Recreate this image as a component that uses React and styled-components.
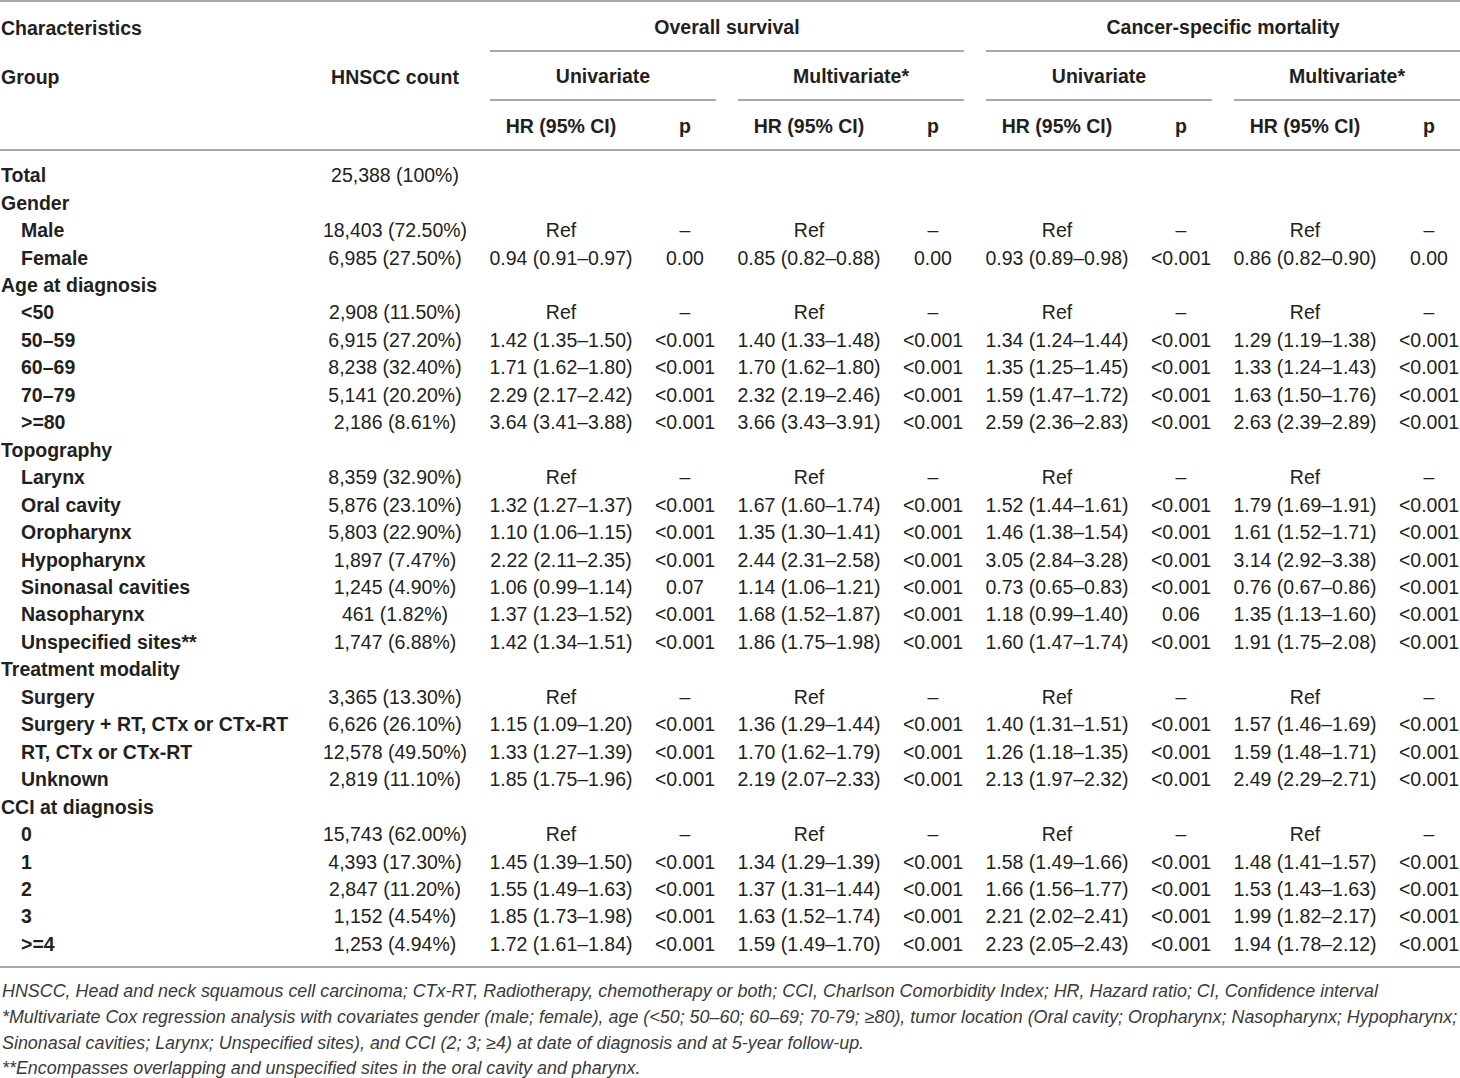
import React from "react";
import styled, { createGlobalStyle } from "styled-components";

const Global = createGlobalStyle`
  html, body { margin: 0; padding: 0; background: #fff; }
  body { font-family: "Liberation Sans", Arial, Helvetica, sans-serif; color: #231f20; }
`;

const COLS = "322px 146px 186px 62px 186px 62px 186px 62px 186px 62px";
const LINE = "2px solid #a9a9a9";

const Page = styled.div`
  width: 1460px;
`;

const Table = styled.div`
  border-top: ${LINE};
  border-bottom: ${LINE};
`;

const Head = styled.div`
  display: grid;
  grid-template-columns: ${COLS};
  grid-template-rows: 50px 49px 48px;
  border-bottom: ${LINE};
  font-size: 19.5px;
  font-weight: 700;
`;

const HeadCell = styled.div`
  grid-column: ${(p) => p.$col};
  grid-row: ${(p) => p.$row};
  display: flex;
  align-items: center;
  justify-content: ${(p) => (p.$left ? "flex-start" : "center")};
  padding-left: ${(p) => (p.$left ? "1px" : "0")};
  padding-top: 2px;
  white-space: nowrap;
`;

const SpanHead = styled(HeadCell)`
  margin-left: 22px;
  border-bottom: ${LINE};
`;

const Body = styled.div`
  padding: 11px 0 8px;
`;

const Row = styled.div`
  display: grid;
  grid-template-columns: ${COLS};
  height: 27.46px;
  align-items: center;
  font-size: 19.5px;
  white-space: nowrap;
`;

const Label = styled.div`
  font-weight: 700;
  padding-left: ${(p) => (p.$indent ? "21px" : "1px")};
`;

const Value = styled.div`
  text-align: center;
`;

const Notes = styled.div`
  padding-top: 11px;
  font-size: 17.9px;
  font-style: italic;
  line-height: 25.7px;
  color: #3a3a3a;
  white-space: nowrap;
`;

const Note = styled.div`
  padding-left: 2px;
`;

const sections = [
  { label: "Total", count: "25,388 (100%)", top: true },
  { label: "Gender", top: true },
  { label: "Male", count: "18,403 (72.50%)", ref: true },
  { label: "Female", count: "6,985 (27.50%)", v: ["0.94 (0.91–0.97)", "0.00", "0.85 (0.82–0.88)", "0.00", "0.93 (0.89–0.98)", "<0.001", "0.86 (0.82–0.90)", "0.00"] },
  { label: "Age at diagnosis", top: true },
  { label: "<50", count: "2,908 (11.50%)", ref: true },
  { label: "50–59", count: "6,915 (27.20%)", v: ["1.42 (1.35–1.50)", "<0.001", "1.40 (1.33–1.48)", "<0.001", "1.34 (1.24–1.44)", "<0.001", "1.29 (1.19–1.38)", "<0.001"] },
  { label: "60–69", count: "8,238 (32.40%)", v: ["1.71 (1.62–1.80)", "<0.001", "1.70 (1.62–1.80)", "<0.001", "1.35 (1.25–1.45)", "<0.001", "1.33 (1.24–1.43)", "<0.001"] },
  { label: "70–79", count: "5,141 (20.20%)", v: ["2.29 (2.17–2.42)", "<0.001", "2.32 (2.19–2.46)", "<0.001", "1.59 (1.47–1.72)", "<0.001", "1.63 (1.50–1.76)", "<0.001"] },
  { label: ">=80", count: "2,186 (8.61%)", v: ["3.64 (3.41–3.88)", "<0.001", "3.66 (3.43–3.91)", "<0.001", "2.59 (2.36–2.83)", "<0.001", "2.63 (2.39–2.89)", "<0.001"] },
  { label: "Topography", top: true },
  { label: "Larynx", count: "8,359 (32.90%)", ref: true },
  { label: "Oral cavity", count: "5,876 (23.10%)", v: ["1.32 (1.27–1.37)", "<0.001", "1.67 (1.60–1.74)", "<0.001", "1.52 (1.44–1.61)", "<0.001", "1.79 (1.69–1.91)", "<0.001"] },
  { label: "Oropharynx", count: "5,803 (22.90%)", v: ["1.10 (1.06–1.15)", "<0.001", "1.35 (1.30–1.41)", "<0.001", "1.46 (1.38–1.54)", "<0.001", "1.61 (1.52–1.71)", "<0.001"] },
  { label: "Hypopharynx", count: "1,897 (7.47%)", v: ["2.22 (2.11–2.35)", "<0.001", "2.44 (2.31–2.58)", "<0.001", "3.05 (2.84–3.28)", "<0.001", "3.14 (2.92–3.38)", "<0.001"] },
  { label: "Sinonasal cavities", count: "1,245 (4.90%)", v: ["1.06 (0.99–1.14)", "0.07", "1.14 (1.06–1.21)", "<0.001", "0.73 (0.65–0.83)", "<0.001", "0.76 (0.67–0.86)", "<0.001"] },
  { label: "Nasopharynx", count: "461 (1.82%)", v: ["1.37 (1.23–1.52)", "<0.001", "1.68 (1.52–1.87)", "<0.001", "1.18 (0.99–1.40)", "0.06", "1.35 (1.13–1.60)", "<0.001"] },
  { label: "Unspecified sites**", count: "1,747 (6.88%)", v: ["1.42 (1.34–1.51)", "<0.001", "1.86 (1.75–1.98)", "<0.001", "1.60 (1.47–1.74)", "<0.001", "1.91 (1.75–2.08)", "<0.001"] },
  { label: "Treatment modality", top: true },
  { label: "Surgery", count: "3,365 (13.30%)", ref: true },
  { label: "Surgery + RT, CTx or CTx-RT", count: "6,626 (26.10%)", v: ["1.15 (1.09–1.20)", "<0.001", "1.36 (1.29–1.44)", "<0.001", "1.40 (1.31–1.51)", "<0.001", "1.57 (1.46–1.69)", "<0.001"] },
  { label: "RT, CTx or CTx-RT", count: "12,578 (49.50%)", v: ["1.33 (1.27–1.39)", "<0.001", "1.70 (1.62–1.79)", "<0.001", "1.26 (1.18–1.35)", "<0.001", "1.59 (1.48–1.71)", "<0.001"] },
  { label: "Unknown", count: "2,819 (11.10%)", v: ["1.85 (1.75–1.96)", "<0.001", "2.19 (2.07–2.33)", "<0.001", "2.13 (1.97–2.32)", "<0.001", "2.49 (2.29–2.71)", "<0.001"] },
  { label: "CCI at diagnosis", top: true },
  { label: "0", count: "15,743 (62.00%)", ref: true },
  { label: "1", count: "4,393 (17.30%)", v: ["1.45 (1.39–1.50)", "<0.001", "1.34 (1.29–1.39)", "<0.001", "1.58 (1.49–1.66)", "<0.001", "1.48 (1.41–1.57)", "<0.001"] },
  { label: "2", count: "2,847 (11.20%)", v: ["1.55 (1.49–1.63)", "<0.001", "1.37 (1.31–1.44)", "<0.001", "1.66 (1.56–1.77)", "<0.001", "1.53 (1.43–1.63)", "<0.001"] },
  { label: "3", count: "1,152 (4.54%)", v: ["1.85 (1.73–1.98)", "<0.001", "1.63 (1.52–1.74)", "<0.001", "2.21 (2.02–2.41)", "<0.001", "1.99 (1.82–2.17)", "<0.001"] },
  { label: ">=4", count: "1,253 (4.94%)", v: ["1.72 (1.61–1.84)", "<0.001", "1.59 (1.49–1.70)", "<0.001", "2.23 (2.05–2.43)", "<0.001", "1.94 (1.78–2.12)", "<0.001"] },
];

const REF = ["Ref", "–", "Ref", "–", "Ref", "–", "Ref", "–"];

export default function App() {
  return (
    <Page>
      <Global />
      <Table>
        <Head>
          <HeadCell $col="1 / 3" $row="1" $left>Characteristics</HeadCell>
          <SpanHead $col="3 / 7" $row="1">Overall survival</SpanHead>
          <SpanHead $col="7 / 11" $row="1">Cancer-specific mortality</SpanHead>
          <HeadCell $col="1" $row="2" $left>Group</HeadCell>
          <HeadCell $col="2" $row="2">HNSCC count</HeadCell>
          <SpanHead $col="3 / 5" $row="2">Univariate</SpanHead>
          <SpanHead $col="5 / 7" $row="2">Multivariate*</SpanHead>
          <SpanHead $col="7 / 9" $row="2">Univariate</SpanHead>
          <SpanHead $col="9 / 11" $row="2">Multivariate*</SpanHead>
          {[3, 5, 7, 9].map((c) => (
            <React.Fragment key={c}>
              <HeadCell $col={String(c)} $row="3">HR (95% CI)</HeadCell>
              <HeadCell $col={String(c + 1)} $row="3">p</HeadCell>
            </React.Fragment>
          ))}
        </Head>
        <Body>
          {sections.map((r, i) => {
            const vals = r.ref ? REF : r.v || [];
            return (
              <Row key={i}>
                <Label $indent={!r.top}>{r.label}</Label>
                <Value>{r.count || ""}</Value>
                {vals.map((v, j) => (
                  <Value key={j}>{v}</Value>
                ))}
              </Row>
            );
          })}
        </Body>
      </Table>
      <Notes>
        <Note>HNSCC, Head and neck squamous cell carcinoma; CTx-RT, Radiotherapy, chemotherapy or both; CCI, Charlson Comorbidity Index; HR, Hazard ratio; CI, Confidence interval</Note>
        <Note>*Multivariate Cox regression analysis with covariates gender (male; female), age (&lt;50; 50–60; 60–69; 70-79; ≥80), tumor location (Oral cavity; Oropharynx; Nasopharynx; Hypopharynx;</Note>
        <Note>Sinonasal cavities; Larynx; Unspecified sites), and CCI (2; 3; ≥4) at date of diagnosis and at 5-year follow-up.</Note>
        <Note>**Encompasses overlapping and unspecified sites in the oral cavity and pharynx.</Note>
      </Notes>
    </Page>
  );
}
